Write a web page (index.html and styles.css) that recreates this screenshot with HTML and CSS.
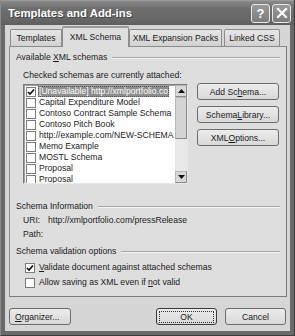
FILE: index.html
```html
<!DOCTYPE html>
<html>
<head>
<meta charset="utf-8">
<link rel="stylesheet" href="styles.css">
</head>
<body>
<div class="window">
  <div class="titlebar">
    <span class="title">Templates and Add-ins</span>
    <div class="tbtns">
      <span class="tbtn">?</span>
      <span class="tbtn">
        <svg width="12" height="12" viewBox="0 0 12 12"><path d="M2 2L10 10M10 2L2 10" stroke="#fff" stroke-width="2.2" stroke-linecap="square"/></svg>
      </span>
    </div>
  </div>
  <div class="client">
    <div class="tabs">
      <div class="tab t1">Templates</div>
      <div class="tab active">XML Schema</div>
      <div class="tab t3">XML Expansion Packs</div>
      <div class="tab t4">Linked CSS</div>
    </div>
    <div class="panel">
      <div class="group-title"><span>Available <u>X</u>ML schemas</span><i class="rule"></i></div>
      <div class="indent caption">Checked schemas are currently attached:</div>
      <div class="schema-row">
        <div class="listbox">
          <div class="items">
            <div class="item"><span class="cb checked"><svg width="8" height="8" viewBox="0 0 8 8"><path d="M1 4L3 6L7 1.5" stroke="#111" stroke-width="1.7" fill="none"/></svg></span><span class="label sel">[Unavailable] http://xmlportfolio.co</span></div>
            <div class="item"><span class="cb"></span><span class="label">Capital Expenditure Model</span></div>
            <div class="item"><span class="cb"></span><span class="label">Contoso Contract Sample Schema</span></div>
            <div class="item"><span class="cb"></span><span class="label">Contoso Pitch Book</span></div>
            <div class="item"><span class="cb"></span><span class="label">http://example.com/NEW-SCHEMA</span></div>
            <div class="item"><span class="cb"></span><span class="label">Memo Example</span></div>
            <div class="item"><span class="cb"></span><span class="label">MOSTL Schema</span></div>
            <div class="item"><span class="cb"></span><span class="label">Proposal</span></div>
            <div class="item"><span class="cb"></span><span class="label">Proposal</span></div>
          </div>
          <div class="scrollbar">
            <div class="sbtn"><svg width="7" height="4" viewBox="0 0 7 4"><path d="M0 4L3.5 0L7 4Z" fill="#111"/></svg></div>
            <div class="thumb"></div>
            <div class="track"></div>
            <div class="sbtn"><svg width="7" height="4" viewBox="0 0 7 4"><path d="M0 0L3.5 4L7 0Z" fill="#111"/></svg></div>
          </div>
        </div>
        <div class="side-buttons">
          <div class="btn">Add Sc<u>h</u>ema...</div>
          <div class="btn">Schema <u>L</u>ibrary...</div>
          <div class="btn">XML <u>O</u>ptions...</div>
        </div>
      </div>
      <div class="group-title info-title"><span>Schema Information</span><i class="rule"></i></div>
      <div class="indent info-row"><span class="info-key">URI:</span><span>http://xmlportfolio.com/pressRelease</span></div>
      <div class="indent info-row"><span class="info-key">Path:</span><span></span></div>
      <div class="group-title valid-title"><span>Schema validation options</span><i class="rule"></i></div>
      <div class="opt"><span class="cb checked"><svg width="8" height="8" viewBox="0 0 8 8"><path d="M1 4L3 6L7 1.5" stroke="#111" stroke-width="1.7" fill="none"/></svg></span><span><u>V</u>alidate document against attached schemas</span></div>
      <div class="opt"><span class="cb"></span><span>Allow saving as XML even if <u>n</u>ot valid</span></div>
    </div>
    <div class="footer">
      <div class="btn organizer"><u>O</u>rganizer...</div>
      <div class="spacer"></div>
      <div class="btn okbtn"><span class="focus">OK</span></div>
      <div class="btn cancel">Cancel</div>
    </div>
  </div>
</div>
</body>
</html>
```
FILE: styles.css
```css
* { box-sizing: border-box; }
html, body { margin: 0; padding: 0; background: #fff; }
body {
  font-family: "Liberation Sans", Arial, sans-serif;
  font-size: 8.6px;
  color: #1c1c1c;
}
u { text-decoration: underline; text-underline-offset: 1px; }

.window {
  width: 295px;
  height: 336px;
  background: #6a6a6a;
  padding: 0 4px 4px 4px;
  display: flex;
  flex-direction: column;
  border-left: 1px solid #8a8a8a;
  border-right: 1px solid #3c3c3c;
  border-bottom: 1px solid #3c3c3c;
}
.titlebar {
  height: 25px;
  margin: 0 -4px;
  padding: 0 3px 0 7px;
  display: flex;
  align-items: center;
  background: linear-gradient(#8a8a8a, #6e6e6e 30%, #666 80%, #5e5e5e);
  border-top: 1px solid #9a9a9a;
}
.title {
  flex: 1;
  color: #fff;
  font-weight: bold;
  font-size: 11.4px;
  text-shadow: 1px 1px 0 #444;
}
.tbtns { display: flex; gap: 2px; }
.tbtn {
  width: 19px;
  height: 19px;
  border: 1px solid #e8e8e8;
  border-radius: 3px;
  background: linear-gradient(#999, #7c7c7c);
  color: #fff;
  font-weight: bold;
  font-size: 13px;
  display: flex;
  align-items: center;
  justify-content: center;
}

.client {
  flex: 1;
  background: #d6d6d6;
  display: flex;
  flex-direction: column;
  padding: 3px 3px 0 3px;
}

.tabs {
  display: flex;
  align-items: flex-end;
  height: 18px;
  padding-left: 2px;
  position: relative;
  z-index: 2;
}
.tab {
  height: 17px;
  padding: 0;
  display: flex;
  align-items: center;
  justify-content: center;
  white-space: nowrap;
  background: linear-gradient(#e6e6e6, #d2d2d2);
  border: 1px solid #8c8c8c;
  border-bottom: none;
  border-radius: 2px 2px 0 0;
  margin-right: 2px;
  color: #222;
}
.t1 { width: 52px; }
.t3 { width: 93px; }
.t4 { width: 56px; }
.tab.active {
  height: 21px;
  width: 67px;
  margin: 0 0 -1px -2px;
  padding: 0 0 1px;
  background: #dedede;
  border-top: 2px solid #9a9a9a;
}

.panel {
  height: 251px;
  margin-left: 1px;
  margin-right: 0;
  background: #dedede;
  border: 1px solid #8c8c8c;
  border-right-color: #7a7a7a;
  border-bottom-color: #7a7a7a;
  padding: 5px 6px 0 6px;
  display: flex;
  flex-direction: column;
}
.group-title {
  display: flex;
  align-items: center;
  height: 11px;
  line-height: 11px;
}
.rule {
  flex: 1;
  height: 0;
  margin-left: 5px;
  border-top: 1px solid #a8a8a8;
  border-bottom: 1px solid #f4f4f4;
}
.indent { margin-left: 7px; }
.caption { margin-top: 7px; line-height: 11px; height: 11px; }

.schema-row {
  display: flex;
  margin-top: 3px;
  margin-left: 7px;
  gap: 9px;
}
.listbox {
  width: 165px;
  height: 100px;
  border: 1px solid #7c7c7c;
  border-right-color: #e8e8e8;
  border-bottom-color: #e8e8e8;
  background: #fff;
  display: flex;
  box-shadow: inset 1px 1px 0 #a0a0a0;
}
.items {
  flex: 1;
  padding: 1px 0 0 2px;
  overflow: hidden;
  white-space: nowrap;
}
.item {
  height: 11px;
  display: flex;
  align-items: center;
}
.cb {
  width: 10px;
  height: 10px;
  border: 1px solid #7c7c7c;
  background: #fff;
  flex: none;
  display: flex;
  align-items: center;
  justify-content: center;
}
.label {
  margin-left: 2px;
  padding: 0 1px;
  line-height: 11px;
  height: 11px;
}
.label.sel {
  background: #8e8e8e;
  color: #fff;
  outline: 1px dotted #555;
  outline-offset: -1px;
}
.scrollbar {
  width: 12px;
  display: flex;
  flex-direction: column;
  background: #e8e8e8;
}
.sbtn {
  height: 12px;
  background: #d8d8d8;
  border: 1px solid #b4b4b4;
  border-right-color: #8a8a8a;
  border-bottom-color: #8a8a8a;
  display: flex;
  align-items: center;
  justify-content: center;
}
.thumb {
  height: 42px;
  background: #d4d4d4;
  border: 1px solid #b8b8b8;
  border-right-color: #8a8a8a;
  border-bottom-color: #8a8a8a;
}
.track { flex: 1; }

.side-buttons {
  display: flex;
  flex-direction: column;
  gap: 6px;
  margin-top: -1px;
}
.btn {
  width: 82px;
  height: 17px;
  display: flex;
  align-items: center;
  justify-content: center;
  background: linear-gradient(#ececec, #d8d8d8);
  border: 1px solid #6c6c6c;
  border-radius: 3px;
  color: #1c1c1c;
  white-space: nowrap;
}

.info-title { margin-top: 17px; }
.info-row {
  display: flex;
  height: 11px;
  line-height: 11px;
  margin-top: 3px;
}
.info-row + .info-row { margin-top: 3px; }
.info-key { width: 25px; }
.valid-title { margin-top: 6px; }
.opt {
  display: flex;
  align-items: center;
  height: 11px;
  line-height: 11px;
  margin-left: 9px;
  margin-top: 5px;
  gap: 4px;
}
.opt + .opt { margin-top: 4px; }

.footer {
  display: flex;
  align-items: center;
  margin-top: 11px;
  padding-left: 1px;
}
.spacer { flex: 1; }
.organizer { width: 62px; justify-content: flex-start; padding-left: 5px; }
.okbtn { width: 61px; border-color: #3a3a3a; margin-right: 8px; }
.focus {
  display: flex;
  align-items: center;
  justify-content: center;
  width: 55px;
  height: 12px;
  border: 1px dotted #333;
}
.cancel { width: 61px; margin-right: 1px; }
```
